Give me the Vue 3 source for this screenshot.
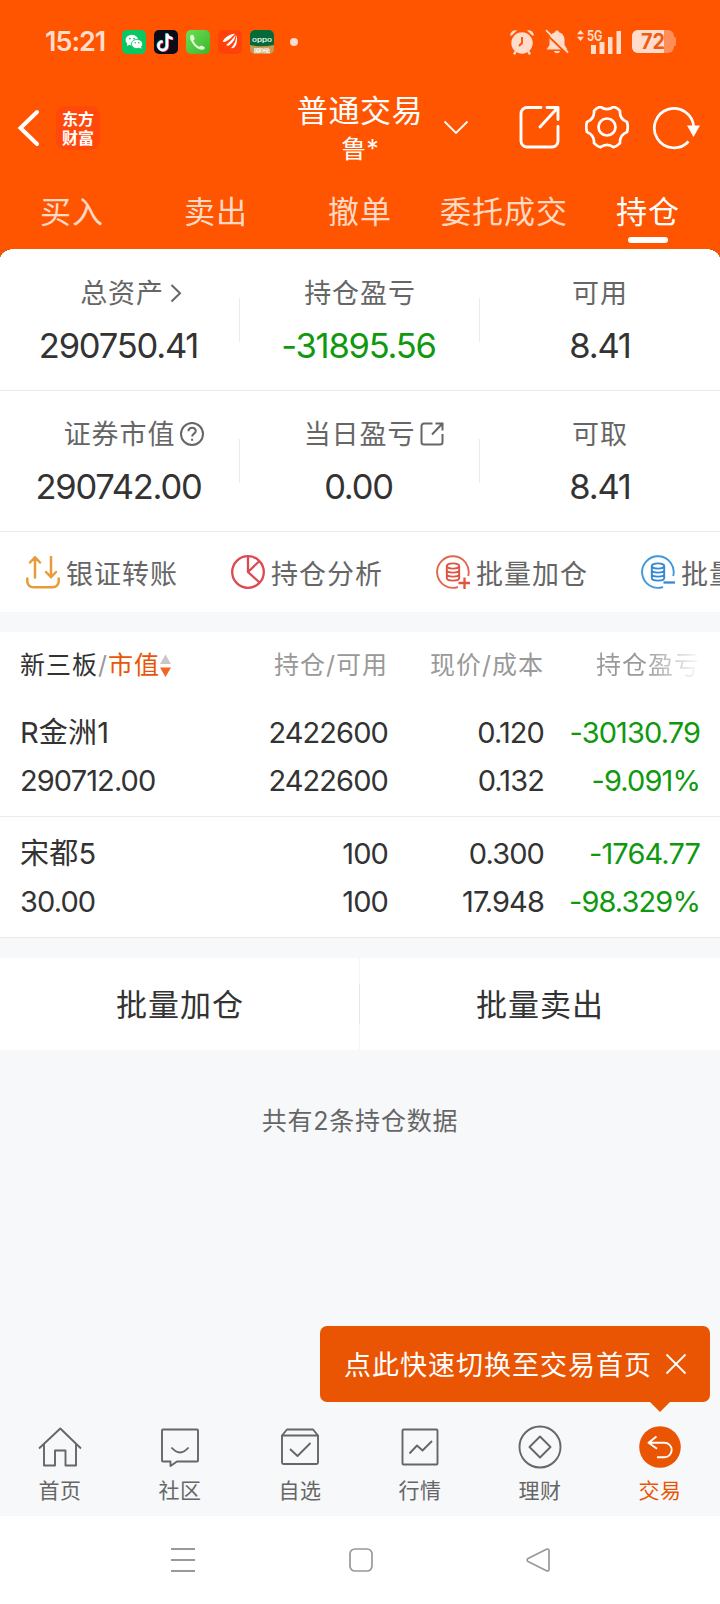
<script setup>
import { ref } from 'vue'

const tabs = ['买入', '卖出', '撤单', '委托成交', '持仓']
const activeTab = ref('持仓')

const summary = [
  [
    { label: '总资产', value: '290750.41', icon: 'arrow' },
    { label: '持仓盈亏', value: '-31895.56', green: true },
    { label: '可用', value: '8.41' }
  ],
  [
    { label: '证券市值', value: '290742.00', icon: 'help' },
    { label: '当日盈亏', value: '0.00', icon: 'share' },
    { label: '可取', value: '8.41' }
  ]
]

const actions = [
  { name: '银证转账', icon: 'transfer' },
  { name: '持仓分析', icon: 'pie' },
  { name: '批量加仓', icon: 'plus' },
  { name: '批量卖出', icon: 'minus' }
]

const positions = [
  { name: 'R金洲1', value: '290712.00', hold: '2422600', usable: '2422600', price: '0.120', cost: '0.132', profit: '-30130.79', rate: '-9.091%' },
  { name: '宋都5', value: '30.00', hold: '100', usable: '100', price: '0.300', cost: '17.948', profit: '-1764.77', rate: '-98.329%' }
]

const menu = [
  { name: '首页', icon: 'home' },
  { name: '社区', icon: 'chat' },
  { name: '自选', icon: 'check' },
  { name: '行情', icon: 'chart' },
  { name: '理财', icon: 'money' },
  { name: '交易', icon: 'trade' }
]
const showTip = ref(true)
</script>

<template>
  <div class="page">
    <header class="header">
      <div class="status">
        <span class="time">15:21</span>
        <div class="apps">
          <svg width="24" height="24" viewBox="0 0 24 24">
            <rect width="24" height="24" rx="5" fill="#07c862" />
            <ellipse cx="9.8" cy="10" rx="6.3" ry="5.2" fill="#fff" />
            <path d="M5.5 13l-.7 3 3.2-1.5z" fill="#fff" />
            <ellipse cx="15" cy="14" rx="5.6" ry="4.6" fill="#fff" stroke="#07c862" stroke-width=".8" />
            <path d="M17 17.5l2.6 1.2-.6-2.8z" fill="#fff" />
            <g fill="#07c862"><circle cx="7.8" cy="8.6" r=".9" /><circle cx="12" cy="8.6" r=".9" /><circle cx="13.2" cy="12.8" r=".8" /><circle cx="16.8" cy="12.8" r=".8" /></g>
          </svg>
          <svg width="24" height="24" viewBox="0 0 24 24" fill="none" stroke-width="2.5">
            <rect width="24" height="24" rx="5" fill="#0c0b18" />
            <path d="M13 3.500v12.100a4.300 4.300 0 1 1-4.300-4.300M13 3.500c.4 2.800 2.400 4.500 5.600 4.600" stroke="#25f4ee" transform="translate(-.6 -.3)" />
            <path d="M13 3.500v12.100a4.300 4.300 0 1 1-4.300-4.300M13 3.500c.4 2.800 2.400 4.500 5.600 4.600" stroke="#fe2c55" transform="translate(.8 .9)" />
            <path d="M13 3.500v12.100a4.300 4.300 0 1 1-4.300-4.300M13 3.500c.4 2.800 2.400 4.500 5.600 4.600" stroke="#fff" transform="translate(.1 .3)" />
          </svg>
          <svg width="24" height="24" viewBox="0 0 24 24">
            <defs>
              <linearGradient id="call" x1="0" y1="0" x2="1" y2="1"><stop offset="0" stop-color="#6adf55" /><stop offset="1" stop-color="#3cb52d" /></linearGradient>
            </defs>
            <rect width="24" height="24" rx="5" fill="url(#call)" />
            <path d="M4.500 5.600c1.600-1.300 2.700-.8 3.300.6l.7 2c.3 1-.2 1.600-1.200 2.200 1.200 2.900 3.300 5 6.200 6.300.7-1 1.500-1.300 2.400-.9l2 .9c1.200.7 1.300 1.500.3 2.400-2.200 1.600-6.700-.2-9.800-3.400C5.300 12.300 3 7.300 4.500 5.600z" fill="#e4fbdc" />
          </svg>
          <svg width="24" height="24" viewBox="0 0 24 24" fill="#fff">
            <rect width="24" height="24" rx="5" fill="#ff4209" />
            <path d="M17 3.800C11.500 4.200 7 7.500 4.600 11.500c1 .6 2.200.5 3.200 0C11.500 9.800 14 7 17 3.800z" />
            <path d="M17.600 4.800C15.500 8 12.500 11.500 8.200 15c1 1 2.600.8 3.800-.2 3.600-2.700 5.400-6 5.600-10z" />
            <path d="M18.300 5.300c0 4.500-1.600 9-5.100 12.700 1.400.6 2.800.1 3.900-1.400 2.300-3.200 2.300-7.700 1.200-11.300z" />
          </svg>
          <svg width="24" height="24" viewBox="0 0 24 24">
            <rect width="24" height="24" rx="5" fill="#c79a55" />
            <path d="M0 5a5 5 0 0 1 5-5h14a5 5 0 0 1 5 5v10q-12 2.500-24 0z" fill="#046a38" />
            <text x="2" y="11.500" font-size="5.500" font-weight="500" textLength="20" lengthAdjust="spacingAndGlyphs" fill="#fff">oppo</text>
            <text x="4" y="22.200" font-size="4.500" font-weight="700" textLength="16" fill="#fff">国家补贴</text>
          </svg>
        </div>
        <i class="dot"></i>
        <div class="signals">
          <svg width="26" height="26" viewBox="0 0 26 26" fill="#ffdccb">
            <circle cx="13" cy="14" r="10.700" />
            <path d="M1 6.200C1.500 3 4.500.8 8 1.500L2.500 6.800zM25 6.200C24.500 3 21.500.8 18 1.500l5.500 5.300z" />
            <path d="M7 22l-2 3.300M19 22l2 3.300" stroke="#ffdccb" stroke-width="2.400" />
            <path d="M13 8v6l-3 3" fill="none" stroke="#ff5500" stroke-width="1.900" />
          </svg>
          <svg class="bell" width="24" height="26" viewBox="0 0 24 26" fill="#ffdccb">
            <path d="M12 1.500c1.200 0 1.800.7 1.900 1.700 3.600.9 5.600 3.800 5.600 7.300v5.500l3 4.500H1.500L4.500 16v-5.500c0-3.500 2-6.400 5.600-7.300.1-1 .7-1.700 1.900-1.700zM9 22h6c-.4 1.500-1.500 2.200-3 2.200S9.400 23.500 9 22z" />
            <path d="M-1 3l24 23" stroke="#ff5500" stroke-width="2" />
            <path d="M1 1.200l22 22.300" stroke="#ffdccb" stroke-width="1.800" />
          </svg>
          <svg class="net" width="46" height="26" viewBox="0 0 46 26" fill="#ffdccb">
            <path d="M0 5.300L3.500 1 7 5.300zM0 7.700L3.500 12 7 7.700z" />
            <text x="10" y="11.500" font-size="14" font-weight="700" textLength="15.500" lengthAdjust="spacingAndGlyphs">5G</text>
            <path d="M14 16h5v9h-5zM22.500 13h5v12h-5zM31 8h4.500v17H31zM39.500 2H44v23h-4.500z" />
          </svg>
          <svg width="44" height="24" viewBox="0 0 44 24">
            <rect width="42" height="23" rx="6" fill="#ff8e57" />
            <path d="M42 7h1q1 0 1 1.500v6q0 1.500-1 1.500h-1z" fill="#ff8e57" />
            <path d="M6 0h26v23H6a6 6 0 0 1-6-6V6a6 6 0 0 1 6-6z" fill="#ffdccb" />
            <text x="9" y="19.300" font-size="21" font-weight="700" textLength="24" lengthAdjust="spacingAndGlyphs" fill="#ef5a12">72</text>
          </svg>
        </div>
      </div>

      <div class="titlebar">
        <svg class="back" width="24" height="38" viewBox="0 0 24 38" fill="none" stroke="#fff" stroke-width="4" stroke-linecap="round">
          <path d="M21 3L4.500 19 21 35" />
        </svg>
        <div class="logo"><span>东方</span><span>财富</span></div>
        <div class="title">
          <h1>普通交易</h1>
          <p>鲁*</p>
        </div>
        <svg class="down" width="26" height="16" viewBox="0 0 26 16" fill="none" stroke="#fff" stroke-width="1.800">
          <path d="M1.500 1.500L13 13 24.500 1.500" />
        </svg>
        <div class="tools">
          <svg width="42" height="44" viewBox="0 0 42 44" fill="none" stroke="#fff" stroke-width="2.900" stroke-linecap="round" stroke-linejoin="round">
            <path d="M22 1.500H8a6 6 0 0 0-6 6V35a6 6 0 0 0 6 6h25a6 6 0 0 0 6-6V20.500" />
            <path d="M21 21L38 2.500M28 1.500h11v12" />
          </svg>
          <svg width="44" height="44" viewBox="0 0 44 44" fill="none" stroke="#fff" stroke-width="2.700" stroke-linejoin="round">
            <path d="M15.500.8Q22 5.500 28.500.8Q32 1.600 35 4.800Q34.300 12.800 42 16Q43.500 21 42 26Q34.300 29.200 35 37.200Q32 40.400 28.500 41.200Q22 36.500 15.500 41.200Q12 40.400 9 37.200Q9.700 29.200 2 26Q.5 21 2 16Q9.700 12.800 9 4.800Q12 1.600 15.500.8z" />
            <circle cx="22" cy="21" r="8.500" />
          </svg>
          <svg width="48" height="44" viewBox="0 0 48 44" fill="none" stroke="#fff" stroke-width="2.700">
            <path d="M36.500 35.500A19.700 19.700 0 1 1 41.700 21" />
            <path d="M35 19.500h13L41.500 31z" fill="#fff" stroke="none" />
          </svg>
        </div>
      </div>

      <nav class="tabs">
        <a v-for="tab in tabs" :key="tab" :class="{ active: tab === activeTab }" @click="activeTab = tab">{{ tab }}</a>
      </nav>
    </header>

    <section class="assets">
      <div v-for="(row, i) in summary" :key="i" class="asset-row">
        <div v-for="item in row" :key="item.label" class="asset">
          <div class="asset-label">
            <span>{{ item.label }}</span>
            <svg v-if="item.icon === 'arrow'" class="narrow" width="24" height="24" viewBox="0 0 24 24">
              <path d="M3.500 4l8.500 8.300-8.500 8.200" />
            </svg>
            <svg v-if="item.icon === 'help'" width="24" height="24" viewBox="0 0 24 24">
              <circle cx="12" cy="12" r="11" />
              <path d="M8.500 9.300c0-4.700 7.300-4.500 7.300-.3 0 2.600-3.600 2.600-3.700 5.500M12.100 16.700v2" />
            </svg>
            <svg v-if="item.icon === 'share'" width="24" height="24" viewBox="0 0 24 24">
              <path d="M12.500 1.500H4a2.500 2.500 0 0 0-2.500 2.500v16A2.500 2.500 0 0 0 4 22.500h16a2.500 2.500 0 0 0 2.500-2.500v-8M12 12.500L22 2M15.500 1.500h7v7" />
            </svg>
          </div>
          <div class="asset-value" :class="{ green: item.green }">{{ item.value }}</div>
        </div>
      </div>
    </section>

    <section class="actions">
      <div v-for="item in actions" :key="item.name" class="action">
        <svg v-if="item.icon === 'transfer'" width="34" height="34" viewBox="0 0 34 34" fill="none" stroke="#e99b3a" stroke-width="2.500" stroke-linecap="round">
          <path d="M9 22.500V2.500M4 7.500L9 2.200l5 5.300M25 2v20M20 17l5 5.200 5-5.200M1.300 23.500v2.800a6 6 0 0 0 6 6h19.400a6 6 0 0 0 6-6v-2.800" />
        </svg>
        <svg v-if="item.icon === 'pie'" width="34" height="34" viewBox="0 0 34 34" fill="none" stroke="#dc4a50" stroke-width="2.300">
          <circle cx="17" cy="17" r="15.800" />
          <path d="M17 1v16l11.500 10.500M17 17L28.500 6" />
        </svg>
        <svg v-if="item.icon === 'plus'" width="34" height="34" viewBox="0 0 34 34" fill="none" stroke="#e0543f" stroke-width="1.900">
          <path d="M32.200 21A15.800 15.800 0 1 0 22 32" stroke="#e56650" />
          <ellipse cx="17" cy="11" rx="6.200" ry="2.600" />
          <path d="M10.800 11v12c0 3.500 12.400 3.500 12.400 0V11M10.800 15c0 3.500 12.400 3.500 12.400 0M10.800 19c0 3.500 12.400 3.500 12.400 0" />
          <path d="M28.500 22.500v11.500M22.500 28h11.500" stroke-width="2.300" />
        </svg>
        <svg v-if="item.icon === 'minus'" width="34" height="34" viewBox="0 0 34 34" fill="none" stroke="#3489d2" stroke-width="1.900">
          <path d="M32.200 21A15.800 15.800 0 1 0 22 32" stroke="#3d98dc" />
          <ellipse cx="17" cy="11" rx="6.200" ry="2.600" />
          <path d="M10.800 11v12c0 3.500 12.400 3.500 12.400 0V11M10.800 15c0 3.500 12.400 3.500 12.400 0M10.800 19c0 3.500 12.400 3.500 12.400 0" />
          <path d="M22.500 27.500h11.500" stroke-width="2.300" />
        </svg>
        <span>{{ item.name }}</span>
      </div>
    </section>

    <section class="table">
      <div class="row thead">
        <div class="sort">
          <span class="dark">新三板</span><span>/</span><span class="orange">市值</span>
          <svg width="11" height="24" viewBox="0 0 11 24">
            <path d="M0 10L5.500 .5 11 10z" fill="#c8c8c8" />
            <path d="M0 13.500L5.500 23 11 13.500z" fill="#f26522" />
          </svg>
        </div>
        <div>持仓/可用</div>
        <div>现价/成本</div>
        <div class="fade">持仓盈亏</div>
      </div>
      <div v-for="item in positions" :key="item.name" class="row item">
        <div><p class="name">{{ item.name }}</p><p>{{ item.value }}</p></div>
        <div><p>{{ item.hold }}</p><p>{{ item.usable }}</p></div>
        <div><p>{{ item.price }}</p><p>{{ item.cost }}</p></div>
        <div class="green"><p>{{ item.profit }}</p><p>{{ item.rate }}</p></div>
      </div>
    </section>

    <div class="batch">
      <button>批量加仓</button>
      <i></i>
      <button>批量卖出</button>
    </div>

    <p class="count">共有2条持仓数据</p>

    <footer class="menu">
      <div v-if="showTip" class="tip">
        <span>点此快速切换至交易首页</span>
        <svg width="22" height="22" viewBox="0 0 22 22" fill="none" stroke="#fff" stroke-width="1.800" @click="showTip = false">
          <path d="M1.500 1.500l19 19M20.500 1.500l-19 19" />
        </svg>
      </div>
      <div v-for="item in menu" :key="item.name" class="menu-item" :class="{ current: item.icon === 'trade' }">
        <svg width="44" height="44" viewBox="0 0 44 44" fill="none" stroke="#666" stroke-width="1.900" stroke-linejoin="round">
          <path v-if="item.icon === 'home'" d="M1 23.500L22.300 3.500 43 23.500M6 19v21.500h11V25.500h10.500v15H38V19" />
          <g v-if="item.icon === 'chat'">
            <path d="M5 4.500h34q1 0 1 1v30q0 1-1 1H19L12.500 41v-4.500H5q-1 0-1-1v-30q0-1 1-1z" />
            <path d="M13.500 22.500q8.500 10 17 0" />
          </g>
          <g v-if="item.icon === 'check'">
            <path d="M4 10.500L9 4.500h26l5 6M4 10.500h36v27q0 1.500-1.500 1.500h-33Q4 39 4 37.500z" />
            <path d="M12 24l7.500 7L32.500 18" />
          </g>
          <g v-if="item.icon === 'chart'">
            <rect x="4.500" y="4.500" width="35" height="35" rx="1" />
            <path d="M11.500 28.500l7.500-8 5.500 5 9.500-9.500" />
          </g>
          <g v-if="item.icon === 'money'">
            <circle cx="22" cy="22" r="20.500" />
            <path d="M22 11.500L32.500 22 22 32.500 11.500 22z" />
          </g>
          <g v-if="item.icon === 'trade'">
            <circle cx="22" cy="22" r="20.800" fill="#ea5504" stroke="none" />
            <path d="M18.500 11.500L10.500 17.800l8.500 6M11 17.800h15.500a7.200 7.200 0 0 1 0 14.400h-7.500" stroke="#fff" />
          </g>
        </svg>
        <span>{{ item.name }}</span>
      </div>
    </footer>

    <div class="sysnav">
      <svg width="24" height="26" viewBox="0 0 24 26" fill="none" stroke="#999" stroke-width="1.900"><path d="M0 2h24M0 13h24M0 24h24" /></svg>
      <svg width="24" height="24" viewBox="0 0 24 24" fill="none" stroke="#999" stroke-width="1.700"><rect x="1" y="1" width="22" height="22" rx="5" /></svg>
      <svg width="24" height="24" viewBox="0 0 24 24" fill="none" stroke="#999" stroke-width="1.700" stroke-linejoin="round"><path d="M2 10.500L20.500 1.200q2.500-.7 2.500 1.600v18.400q0 2.300-2.500 1.600L2 13.500q-1.800-1.500 0-3z" /></svg>
    </div>
  </div>
</template>

<style>
body {
  margin: 0;
  background: #f7f8fa;
}
</style>

<style scoped>
.page {
  width: 720px;
  height: 1604px;
  display: flex;
  flex-direction: column;
  overflow: hidden;
  background: #f7f8fa;
  color: #333;
  font-family: "Inter", "Noto Sans CJK SC", sans-serif;
}

.page svg {
  flex: none;
  display: block;
}

.page .net {
  overflow: visible;
}

p, h1 {
  margin: 0;
  font-weight: 400;
}

/* Cabecera */
.header {
  height: 249px;
  background: #ff5500;
  color: #fff;
}

.status {
  height: 82px;
  display: flex;
  align-items: center;
  padding: 1px 44px 0 45px;
  box-sizing: border-box;
}

.time {
  width: 77px;
  color: #ffdccb;
  font-size: 27px;
  font-weight: 600;
  letter-spacing: -1px;
}

.apps {
  display: flex;
  gap: 8px;
}

.dot {
  width: 8px;
  height: 8px;
  margin-left: 16px;
  border-radius: 50%;
  background: #ffdccb;
}

.signals {
  margin-left: auto;
  display: flex;
  align-items: center;
}

.bell {
  margin-left: 10px;
}

.net {
  margin: 0 9px 0 8px;
}

.titlebar {
  height: 92px;
  display: flex;
  align-items: center;
  padding: 0 20px 0 16px;
}

.logo {
  width: 44px;
  height: 44px;
  margin-left: 16px;
  display: flex;
  flex-direction: column;
  align-items: center;
  justify-content: center;
  border-radius: 9px;
  background: #ff480a;
  font-family: "Noto Sans CJK SC", sans-serif;
  font-size: 16px;
  font-weight: 700;
  line-height: 19px;
}

.title {
  width: 160px;
  margin: 1px 0 0 180px;
  text-align: center;
}

.title h1 {
  font-size: 31px;
  line-height: 40px;
  letter-spacing: 0.6px;
}

.title p {
  font-size: 25px;
  line-height: 36px;
}

.down {
  margin-left: 3px;
}

.tools {
  margin-left: auto;
  display: flex;
  gap: 24px;
}

.tools svg:last-child {
  margin-left: -1px;
}

.tabs {
  height: 75px;
  display: flex;
}

.tabs a {
  flex: 1;
  display: flex;
  flex-direction: column;
  align-items: center;
  font-size: 31px;
  line-height: 76px;
  letter-spacing: 1px;
  color: #ffd9c4;
}

.tabs .active {
  color: #fff;
}

.tabs .active::after {
  content: "";
  width: 40px;
  height: 6px;
  margin-top: -13px;
  border-radius: 3px;
  background: #fff;
}

/* Resumen */
.assets {
  position: relative;
  padding-top: 1px;
  background: #fff;
}

/* esquinas redondeadas sobre el naranja */
.assets::before {
  content: "";
  position: absolute;
  inset: 0 0 auto;
  height: 10px;
  background:
    radial-gradient(ellipse 14px 10px at 14px 10px, #fff 98%, #f15406 100%) left / 14px 10px no-repeat,
    radial-gradient(ellipse 14px 10px at 0 10px, #fff 98%, #f15406 100%) right / 14px 10px no-repeat;
}

.asset-row {
  height: 141px;
  display: flex;
  box-sizing: border-box;
  border-bottom: 1px solid #ebebeb;
}

.asset {
  flex: 1;
  padding-top: 26px;
  text-align: center;
  background: linear-gradient(#ebebeb, #ebebeb) right 48px / 1px 44px no-repeat;
}

.asset:last-child {
  background: none;
}

.asset-label {
  height: 36px;
  display: flex;
  align-items: center;
  justify-content: center;
  font-size: 27px;
  letter-spacing: 0.9px;
  line-height: 36px;
  color: #666;
}

.asset-label svg {
  margin: -2px -28px 0 5px;
  fill: none;
  stroke: #666;
  stroke-width: 2;
}

.asset-label .narrow {
  margin: -2px -32px 0 4px;
}

.asset-value {
  margin: 13px 3px 0 0;
  font-size: 34.5px;
  line-height: 42px;
  letter-spacing: -1.2px;
}

.asset:last-child .asset-value {
  margin-right: 0;
}

.green,
.row .green {
  color: #0f990f;
}

.actions {
  height: 80px;
  display: flex;
  align-items: center;
  overflow: hidden;
  padding-left: 26px;
  background: #fff;
  font-size: 27px;
  letter-spacing: 1px;
  color: #666;
}

.action {
  flex: none;
  width: 205px;
  display: flex;
  align-items: center;
  gap: 6px;
}

/* Tabla */
.table {
  margin-top: 20px;
  background: #fff;
}

.row {
  display: grid;
  grid-template-columns: 200px 168px 156px 156px;
  padding: 0 20px;
  text-align: right;
}

.row > div:first-child {
  text-align: left;
}

.thead {
  height: 64px;
  font-size: 25px;
  letter-spacing: 1px;
  line-height: 67px;
  color: #999;
}

.sort {
  display: flex;
  align-items: center;
}

.dark {
  color: #333;
}

.orange {
  color: #ea5504;
}

.fade {
  background: linear-gradient(90deg, #999 64%, #fff 101%);
  -webkit-background-clip: text;
  background-clip: text;
  color: transparent;
}

.item {
  padding-top: 13px;
  padding-bottom: 11px;
  border-bottom: 1px solid #ebebeb;
  font-size: 29px;
  line-height: 48px;
  letter-spacing: -0.9px;
}

.name {
  letter-spacing: 0.2px;
}

.batch {
  height: 92px;
  margin-top: 20px;
  display: flex;
  align-items: center;
  background: #fff;
}

.batch button {
  flex: 1;
  padding: 0 0 3px;
  border: none;
  background: none;
  color: #333;
  font-family: inherit;
  font-size: 31px;
  letter-spacing: 1px;
}

.batch i {
  width: 1px;
  height: 92px;
  margin-left: -1px;
  background: linear-gradient(#f5f5f5 28%, #e6e6e6 28%, #e6e6e6 72%, #f5f5f5 72%);
}

.count {
  margin-top: 53px;
  text-align: center;
  font-size: 25px;
  line-height: 36px;
  letter-spacing: 0.8px;
  color: #666;
}

/* Menú inferior */
.menu {
  position: relative;
  height: 91px;
  margin-top: auto;
  display: flex;
}

.menu-item {
  flex: 1;
  display: flex;
  flex-direction: column;
  align-items: center;
  font-size: 21px;
  line-height: 30px;
  letter-spacing: 0.4px;
  color: #666;
}

.menu-item span {
  margin-top: 7px;
}

.current {
  color: #ea5504;
}

.tip {
  position: absolute;
  right: 10px;
  bottom: 114px;
  width: 390px;
  height: 76px;
  display: flex;
  align-items: center;
  justify-content: space-between;
  padding: 0 23px 0 24px;
  box-sizing: border-box;
  border-radius: 7px;
  background: #ea5504;
  color: #fff;
  font-size: 27px;
  letter-spacing: 1px;
}

.tip span {
  margin-top: -2px;
}

.tip::after {
  content: "";
  position: absolute;
  right: 40px;
  top: 76px;
  border: 10px solid transparent;
  border-top-color: #ea5504;
  border-bottom: none;
}

.sysnav {
  height: 88px;
  display: flex;
  align-items: center;
  justify-content: center;
  gap: 154px;
  background: #fff;
}

.sysnav svg:last-child {
  margin-left: -1px;
}
</style>
